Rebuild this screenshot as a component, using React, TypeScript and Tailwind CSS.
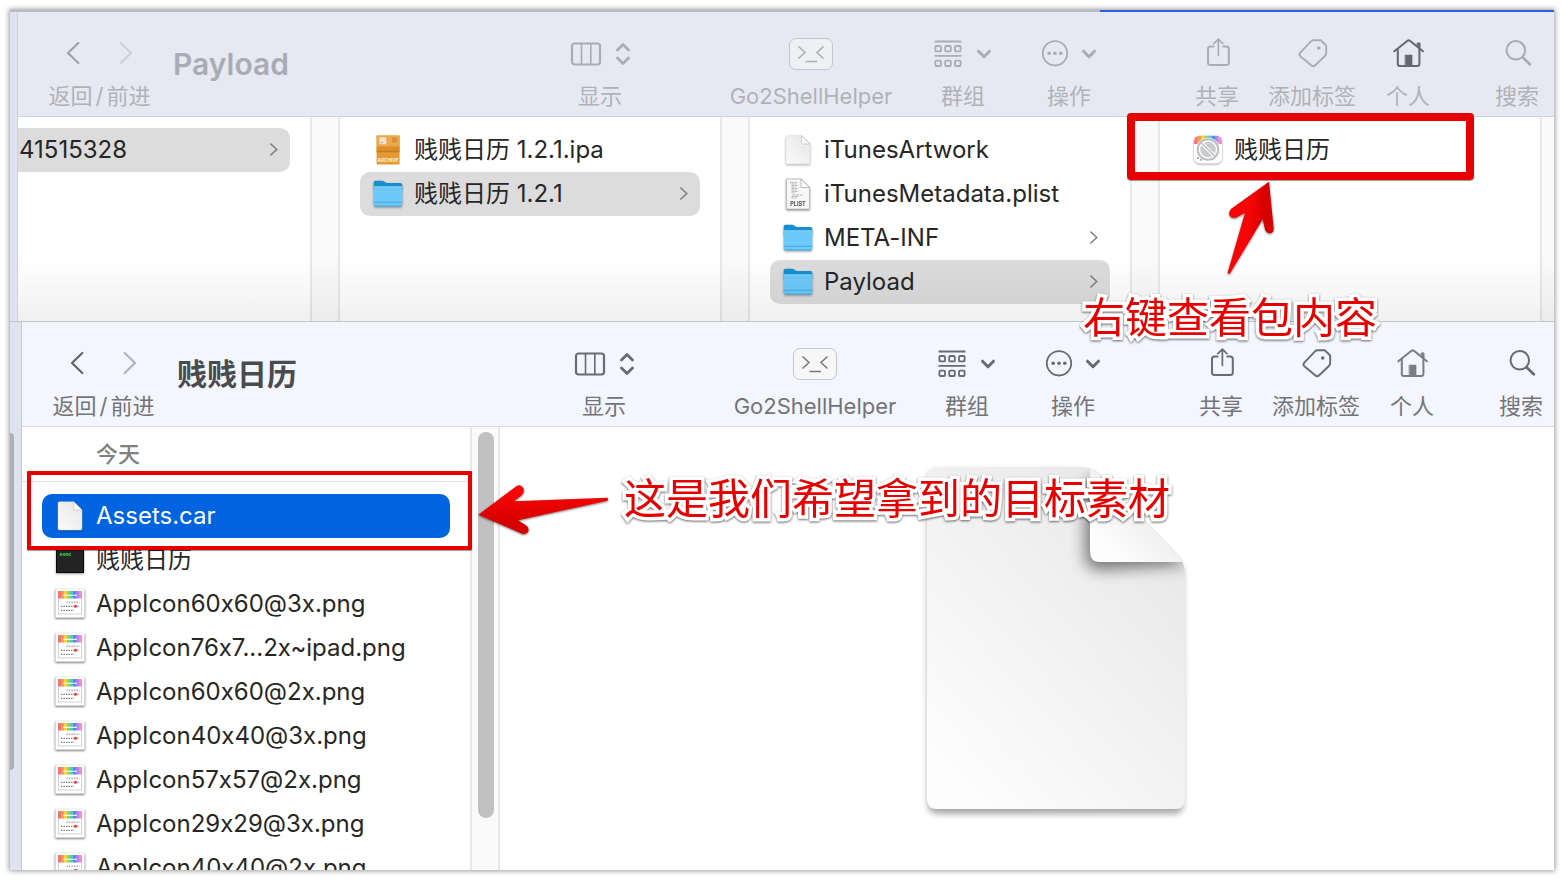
import type { ReactNode } from "react";

type Tone = "dim" | "active";

const tones = {
  dim: {
    header: "bg-[#e6e9f2] border-[#d2d4db]",
    icon: "text-[#a9acb4]",
    label: "text-[#b1b2b7]",
    title: "text-[#a9acb5]",
    back: "text-[#9fa2aa]",
    forward: "text-[#cdd0d8]",
    home: "text-[#656871]",
    shell: "border-[#c4c6cb] bg-[#eff0f4] text-[#a9abb1]",
    pad: "pr-[15px]",
  },
  active: {
    header: "bg-[#f3f6fe] border-[#d9dadf]",
    icon: "text-[#696b73]",
    label: "text-[#737478]",
    title: "text-[#4a4b4e]",
    back: "text-[#62646b]",
    forward: "text-[#b1b4bc]",
    home: "text-[#7a7d87]",
    shell: "border-[#c6c7ca] bg-[#f7f7f8] text-[#77787c]",
    pad: "pr-[11px]",
  },
};

function Chevron({ dir, className }: { dir: "left" | "right"; className: string }) {
  return (
    <svg viewBox="0 0 14 24" className={`h-6 w-3.5 ${className}`} fill="none" stroke="currentColor" strokeWidth="2.2" strokeLinecap="round" strokeLinejoin="round">
      <path d={dir === "left" ? "M12.3 2 2 12l10.300 10" : "M1.700 2 12 12 1.700 22"} />
    </svg>
  );
}

function DownChevron() {
  return (
    <svg viewBox="0 0 16 10" className="h-2.5 w-4" fill="none" stroke="currentColor" strokeWidth="3" strokeLinecap="round" strokeLinejoin="round">
      <path d="M2.500 2.200 8 7.700l5.500-5.500" />
    </svg>
  );
}

function ColumnsIcon() {
  return (
    <svg viewBox="0 0 60 26" className="h-[26px] w-[60px]" fill="none" stroke="currentColor" strokeLinecap="round" strokeLinejoin="round">
      <rect x="2" y="2.500" width="28" height="21" rx="2.500" strokeWidth="2.200" />
      <path d="M11.500 3v20M20.800 3v20" strokeWidth="1.600" />
      <path d="m47.500 9 5.500-5.500L58.500 9M47.500 17l5.500 5.500 5.500-5.500" strokeWidth="2.800" />
    </svg>
  );
}

function GroupIcon() {
  return (
    <svg viewBox="0 0 28 28" className="h-7 w-7" fill="none" stroke="currentColor" strokeWidth="1.800">
      <path d="M.5 1.500h27M.5 15.800h27" />
      <rect x="1.400" y="6" width="5.600" height="5.400" rx="1" />
      <rect x="11.200" y="6" width="5.600" height="5.400" rx="1" />
      <rect x="21" y="6" width="5.600" height="5.400" rx="1" />
      <rect x="1.400" y="20.600" width="5.600" height="5.400" rx="1" />
      <rect x="11.200" y="20.600" width="5.600" height="5.400" rx="1" />
      <rect x="21" y="20.600" width="5.600" height="5.400" rx="1" />
    </svg>
  );
}

function ActionIcon() {
  return (
    <svg viewBox="0 0 28 28" className="h-7 w-7" fill="none" stroke="currentColor" strokeWidth="1.800">
      <circle cx="14" cy="13.300" r="12.200" />
      <g fill="currentColor" stroke="none">
        <circle cx="8.200" cy="13.300" r="1.800" />
        <circle cx="14" cy="13.300" r="1.800" />
        <circle cx="19.800" cy="13.300" r="1.800" />
      </g>
    </svg>
  );
}

function ShareIcon() {
  return (
    <svg viewBox="0 0 32 32" className="size-8" fill="none" stroke="currentColor" strokeWidth="2" strokeLinecap="round" strokeLinejoin="round">
      <path d="M12.500 8.500H9.500Q7 8.500 7 11v13.500Q7 27 9.500 27h15.800q2.500 0 2.500-2.500V11q0-2.500-2.500-2.500h-3" />
      <path d="M17.400 17.500V1.500M12.900 5.700l4.500-4.500 4.500 4.500" strokeWidth="1.700" />
    </svg>
  );
}

function TagIcon() {
  return (
    <svg viewBox="0 0 32 32" className="size-8" fill="none" stroke="currentColor" strokeWidth="1.900" strokeLinejoin="round">
      <path d="M17.500 2.200h7.200l5.500 5.300v7.200q0 2-1.300 3.300l-9.700 9.300q-2 1.900-4 0L4.300 18.200q-1.700-1.800 0-3.600L15 3.300q1-1.100 2.500-1.100Z" />
      <circle cx="22.700" cy="10" r="1.800" fill="currentColor" stroke="none" />
    </svg>
  );
}

function HomeIcon() {
  return (
    <svg viewBox="0 0 32 32" className="size-8" fill="none" stroke="currentColor" strokeWidth="2" strokeLinecap="round" strokeLinejoin="round">
      <path d="M2.300 13.300 15.500 2.800q1.200-.9 2.400 0l13 10.500" />
      <path d="M5.800 11v15q0 2 2 2h17.600q2 0 2-2V11" />
      <path d="M25.500 5h2.500v6l-2.500-2Z" fill="currentColor" strokeWidth="1" />
      <path d="M13.300 17h6.800v11h-6.800Z" fill="currentColor" strokeWidth=".5" />
    </svg>
  );
}

function SearchIcon() {
  return (
    <svg viewBox="0 0 32 32" className="size-8" fill="none" stroke="currentColor" strokeLinecap="round">
      <circle cx="14.800" cy="12.300" r="9.300" strokeWidth="2" />
      <path d="m21.800 19.500 7 6.800" strokeWidth="2.800" />
    </svg>
  );
}

function Tool({ label, width, labelClass, iconClass, children }: { label: string; width: string; labelClass: string; iconClass: string; children: ReactNode }) {
  return (
    <button type="button" className={`flex shrink-0 flex-col items-center gap-3.5 ${width}`}>
      <span className={`flex h-8 w-full items-center justify-center ${iconClass}`}>{children}</span>
      <span className={`text-[22px] leading-6 whitespace-nowrap ${labelClass}`}>{label}</span>
    </button>
  );
}

function Toolbar({ title, tone }: { title: string; tone: Tone }) {
  const t = tones[tone];
  return (
    <header className={`flex h-[105px] shrink-0 items-start border-b pt-[26px] pl-[30px] ${t.header} ${t.pad}`}>
      <div className="flex w-[103px] shrink-0 flex-col items-center gap-3.5">
        <div className="flex h-8 w-full items-center justify-between px-[18px] pb-0.5">
          <button type="button" aria-label="返回">
            <Chevron dir="left" className={t.back} />
          </button>
          <button type="button" aria-label="前进">
            <Chevron dir="right" className={t.forward} />
          </button>
        </div>
        <span className={`text-[22px] leading-6 whitespace-nowrap ${t.label}`}>
          返回<span className="px-[3px]">/</span>前进
        </span>
      </div>
      <h1 className={`mt-1.5 ml-[22px] text-[30px] leading-10 font-semibold whitespace-nowrap ${t.title}`}>{title}</h1>
      <div className="flex-1" />
      <div className="flex shrink-0">
        <Tool label="显示" width="w-[60px] mr-[99px]" labelClass={t.label} iconClass={t.icon}>
          <ColumnsIcon />
        </Tool>
        <Tool label="Go2ShellHelper" width="w-[164px] mr-10" labelClass={t.label} iconClass="">
          <span className={`flex h-8 w-11 items-center justify-center rounded-[7px] border ${t.shell}`}>
            <svg viewBox="0 0 28 20" className="h-5 w-7" fill="none" stroke="currentColor" strokeWidth="1.500">
              <path d="m1.500 2.500 6.500 6-6.500 6M26.500 2.500l-6.500 6 6.500 6M8.500 17.500h11.500" />
            </svg>
          </span>
        </Tool>
        <Tool label="群组" width="w-[60px] mr-12" labelClass={t.label} iconClass={`gap-3.5 ${t.icon}`}>
          <GroupIcon />
          <DownChevron />
        </Tool>
        <Tool label="操作" width="w-[56px] mr-[98px]" labelClass={t.label} iconClass={`gap-3 ${t.icon}`}>
          <ActionIcon />
          <DownChevron />
        </Tool>
        <Tool label="共享" width="w-11 mr-[29px]" labelClass={t.label} iconClass={t.icon}>
          <ShareIcon />
        </Tool>
        <Tool label="添加标签" width="w-[88px] mr-[30px]" labelClass={t.label} iconClass={t.icon}>
          <TagIcon />
        </Tool>
        <Tool label="个人" width="w-11 mr-[65px]" labelClass={t.label} iconClass={t.home}>
          <HomeIcon />
        </Tool>
        <Tool label="搜索" width="w-11" labelClass={t.label} iconClass={t.icon}>
          <SearchIcon />
        </Tool>
      </div>
    </header>
  );
}

function FolderIcon() {
  return (
    <svg viewBox="0 0 30 30" className="size-[30px] drop-shadow-[0_1px_1px_rgba(0,0,0,0.35)]">
      <path d="M.7 3.500Q.7 1.700 2.500 1.700h6.800q1 0 1.800.7l1.400 1.200q.5.400 1.300.4h13.500q2 0 2 2V12H.7Z" fill="#1590cf" />
      <path d="M.7 8h28.600v17.500q0 2-2 2H2.700q-2 0-2-2Z" fill="#6cc9f9" />
      <path d="M.7 7.700h28.600" stroke="#a1defd" strokeWidth=".8" />
      <path d="M.7 23.300h28.600" stroke="#47a9dd" strokeWidth="1" />
      <path d="M1.500 27h27" stroke="#469fcc" strokeWidth=".9" />
    </svg>
  );
}

function FileIcon() {
  return (
    <svg viewBox="0 0 30 30" className="size-[30px] drop-shadow-[0_1px_1px_rgba(0,0,0,0.3)]">
      <defs>
        <linearGradient id="sheet" x1="1" y1="0" x2="0" y2="1">
          <stop offset="0" stopColor="#e6e6e6" />
          <stop offset="1" stopColor="#fbfbfb" />
        </linearGradient>
      </defs>
      <path d="M3 2.200Q3 .8 4.400.8H19l8 8v18.800q0 1.400-1.400 1.400H4.400Q3 29 3 27.600Z" fill="url(#sheet)" stroke="#dadada" strokeWidth=".5" />
      <path d="M18.700.8v7q0 1.200 1.200 1.200H27Z" fill="#fff" stroke="#bdbdbd" strokeWidth=".7" />
    </svg>
  );
}

function PlistIcon() {
  return (
    <svg viewBox="0 0 30 32" className="h-8 w-[30px] drop-shadow-[0_1px_1px_rgba(0,0,0,0.5)]">
      <path d="M3.500 1H18l8.500 8.500V31h-23Z" fill="#f7f7f7" stroke="#b5b5b5" strokeWidth=".7" />
      <path d="M18 1v8.500h8.500Z" fill="#fff" stroke="#aaa" strokeWidth=".8" />
      <path d="M7 4.500h7.500M8.500 6h5M8.500 7.500h6M8.500 9h4.500M8.500 10.500h6M8.500 12h5M8.500 13.500h6M8.500 15h4M9.500 17h11M8.500 18.500h7M8.500 20h5" stroke="#b9b9b9" strokeWidth="1" strokeDasharray="3 .6" />
      <text x="15" y="27.500" textAnchor="middle" fontSize="5.500" fontWeight="700" fill="#555">PLIST</text>
    </svg>
  );
}

function ArchiveIcon() {
  return (
    <svg viewBox="0 0 30 30" className="size-[30px]">
      <rect x="3.600" y=".5" width="23" height="29" rx=".8" fill="#e49a34" />
      <rect x="3.600" y=".5" width="23" height="11" fill="#eaa84c" />
      <path d="M3.600 11.500h23v4h-23Z" fill="#dc8e2a" />
      <path d="M3.600 15.500h23v1.800h-23Z" fill="#c97c1e" />
      <rect x="6.300" y="2.300" width="7" height="7" fill="#efe3cd" />
      <path d="M7.500 7.500h2.500" stroke="#c4aa83" />
      <rect x="19.500" y="3" width="4" height="4" fill="#d99434" stroke="#c78328" strokeWidth=".5" />
      <text x="15.100" y="27" textAnchor="middle" fontSize="4.700" fontWeight="700" fill="#fff4dc">ARCHIVE</text>
    </svg>
  );
}

function ExecIcon() {
  return (
    <svg viewBox="0 0 30 30" className="size-[30px] drop-shadow-[0_1px_1px_rgba(0,0,0,0.4)]">
      <rect x="1.500" y="1.500" width="27" height="26" fill="#242424" stroke="#080808" />
      <text x="4.500" y="11" fontSize="5" fontWeight="800" fill="#35c648">exec</text>
    </svg>
  );
}

function Rainbow({ x, y, w, h }: { x: number; y: number; w: number; h: number }) {
  const colors = ["#f4737b", "#f79a4b", "#f7d33d", "#8fd941", "#58c8c4", "#5a86f2", "#b184f0", "#f08fc8"];
  return (
    <g>
      {colors.map((c, i) => (
        <rect key={c} x={x + (i * w) / 8} y={y} width={w / 8 + 0.1} height={h} fill={c} />
      ))}
    </g>
  );
}

function PngIcon() {
  return (
    <svg viewBox="0 0 30 30" className="size-[30px] drop-shadow-[0_1px_1px_rgba(0,0,0,0.55)]">
      <rect x=".5" y="0" width="29" height="28.500" fill="#fff" stroke="#dcdcdc" strokeWidth=".6" />
      <rect x="3.500" y="2.500" width="23" height="22.500" fill="#fff" stroke="#cdcdcd" strokeWidth=".9" />
      <Rainbow x={3} y={2} w={24} h={7.500} />
      <path d="M8 6.300h14" stroke="#fff" strokeWidth="1.100" />
      <g strokeWidth="1.300" strokeDasharray="1.400 1.100">
        <path d="M11.500 13.200h13" stroke="#999" />
        <path d="M6 17.300h18" stroke="#777" />
        <path d="M6 21.300h13" stroke="#777" />
      </g>
      <circle cx="20.500" cy="17.300" r="1.500" fill="#f5332f" />
    </svg>
  );
}

function AppIcon() {
  return (
    <svg viewBox="0 0 30 30" className="size-[30px] drop-shadow-[0_1px_1px_rgba(0,0,0,0.35)]">
      <defs>
        <clipPath id="app-shape">
          <rect x="1" y=".5" width="28" height="28" rx="6" />
        </clipPath>
      </defs>
      <g clipPath="url(#app-shape)">
        <rect width="30" height="30" fill="#fff" />
        <Rainbow x={1} y={0.500} w={28} h={8.500} />
        <path d="M5 22.500v1.500M8 24v1.500" stroke="#555" strokeWidth="1.200" />
      </g>
      <circle cx="15" cy="14.500" r="12" fill="#fff" fillOpacity=".7" />
      <circle cx="15" cy="14.500" r="10.300" fill="#fff" stroke="#bfbfbf" strokeWidth="2" />
      <circle cx="15" cy="14.500" r="7.800" fill="#c9cbcd" />
      <path d="m9 8.500 12 12" stroke="#fff" strokeWidth="3.600" />
      <path d="m8.300 7.800 13.400 13.400" stroke="#bfbfbf" strokeWidth="1.600" />
    </svg>
  );
}

function RowChevron() {
  return (
    <svg viewBox="0 0 8 14" className="h-3.5 w-2" fill="none" stroke="#7f7f7f" strokeWidth="1.600" strokeLinecap="round" strokeLinejoin="round">
      <path d="m.8 1 6 5.500-6 5.500" />
    </svg>
  );
}

function Row({ icon, name, state = "", folder = false }: { icon: ReactNode; name: string; state?: string; folder?: boolean }) {
  return (
    <button type="button" className={`flex h-11 w-full shrink-0 items-center gap-[11px] rounded-[10px] pr-3 pl-[13px] text-left text-2xl whitespace-nowrap ${state || "text-[#262626]"}`}>
      {icon}
      <span className="flex-1">{name}</span>
      {folder && <RowChevron />}
    </button>
  );
}

const selected = "bg-[#dcdcdc] text-[#262626]";

function Gutter({ children }: { children?: ReactNode }) {
  return <div className="w-[30px] shrink-0 border-x-2 border-[#e8e8e8] bg-[#fafafa] px-1.5 pt-[5px]">{children}</div>;
}

function DocumentPreview() {
  return (
    <svg viewBox="60 60 819 1089" className="h-[363px] w-[273px]">
      <defs>
        <linearGradient id="page" x1="0.900" y1="0.150" x2="0.200" y2="1">
          <stop offset="0" stopColor="#e8e8e8" />
          <stop offset="1" stopColor="#fdfdfd" />
        </linearGradient>
        <linearGradient id="fold" x1="1" y1="0.300" x2="0.300" y2="1">
          <stop offset="0" stopColor="#e2e2e2" />
          <stop offset="1" stopColor="#fdfdfd" />
        </linearGradient>
        <clipPath id="page-shape">
          <path d="M81 115Q81 81 115 81H545Q590 81 620 122L835 345Q855 365 855 405V1077Q855 1107 825 1107H111Q81 1107 81 1077Z" />
        </clipPath>
        <filter id="soft" x="-30%" y="-30%" width="160%" height="160%">
          <feGaussianBlur stdDeviation="22" />
        </filter>
        <filter id="edge" x="-10%" y="-10%" width="120%" height="120%">
          <feGaussianBlur stdDeviation="9" />
        </filter>
      </defs>
      <path d="M83 120Q83 92 115 92H545L850 390V1090Q850 1122 825 1122H111Q83 1122 83 1090Z" fill="#000" opacity=".34" filter="url(#edge)" />
      <g clipPath="url(#page-shape)">
        <rect x="81" y="81" width="774" height="1026" fill="url(#page)" />
        <path d="M556 130V345Q556 388 600 390L860 374 L600 110Z" fill="#000" opacity=".5" filter="url(#soft)" />
        <path d="M570 81V336Q570 366 600 366H870V60H570Z" fill="url(#fold)" />
      </g>
    </svg>
  );
}

const files = [
  "AppIcon60x60@3x.png",
  "AppIcon76x7...2x~ipad.png",
  "AppIcon60x60@2x.png",
  "AppIcon40x40@3x.png",
  "AppIcon57x57@2x.png",
  "AppIcon29x29@3x.png",
  "AppIcon40x40@2x.png",
];

function Note({ children, className }: { children: string; className: string }) {
  return (
    <p className={`absolute text-[42px] leading-[56px] whitespace-nowrap text-[#e60000] [paint-order:stroke_fill] [-webkit-text-stroke:7px_white] drop-shadow-[0_1px_1px_rgba(0,0,0,0.6)] ${className}`}>
      {children}
    </p>
  );
}

function Annotations() {
  return (
    <div className="pointer-events-none absolute inset-0">
      <div className="absolute top-[103px] left-[1117px] h-[67px] w-[347px] rounded border-8 border-[#e60000] shadow-[0_1px_1px_rgba(0,0,0,0.4)]" />
      <div className="absolute top-[461px] left-[17px] h-[79px] w-[445px] rounded-[1px] border-4 border-[#e60000] shadow-[0_1px_1px_rgba(0,0,0,0.4)]" />
      <svg viewBox="378 540 150 288" className="absolute top-[170px] left-[1216px] h-24 w-[50px] drop-shadow-[0_1px_1px_rgba(0,0,0,0.5)]">
        <defs>
          <linearGradient id="up" x1="0" y1="0.400" x2="1" y2="0.600">
            <stop offset=".45" stopColor="#f50505" />
            <stop offset=".75" stopColor="#d60000" />
          </linearGradient>
        </defs>
        <path d="M507 545 394 626Q384 636 389 647 397 658 411 652L435 638 383 818Q385 824 390 820L488 658 495 688Q500 701 511 700 522 697 521 685Z" fill="url(#up)" />
      </svg>
      <svg viewBox="54 462 393 153" className="absolute top-[474px] left-[468px] h-[51px] w-[131px] drop-shadow-[0_1px_1px_rgba(0,0,0,0.5)]">
        <defs>
          <linearGradient id="side" x1="0" y1="0" x2="0" y2="1">
            <stop offset=".2" stopColor="#f50505" />
            <stop offset=".75" stopColor="#d60000" />
          </linearGradient>
        </defs>
        <path d="M55 554 170 468Q182 462 190 474 194 486 186 495L162 514 442 503Q447 508 442 512L174 571 200 587Q209 596 204 606 198 614 186 611Z" fill="url(#side)" />
      </svg>
      <Note className="top-[280px] left-[1073px]">右键查看包内容</Note>
      <Note className="top-[461px] left-[614px]">这是我们希望拿到的目标素材</Note>
    </div>
  );
}

export default function App() {
  return (
    <main className="h-screen bg-white p-2.5 font-['Inter','Noto_Sans_CJK_SC',sans-serif] [font-feature-settings:'calt'_0]">
      <div className="relative flex h-full flex-col overflow-hidden bg-[#dfe3ed] shadow-[0_0_5px_1px_rgba(0,0,0,0.4)]">
        <div className="flex h-0.5 shrink-0 bg-[#b9babd]">
          <div className="ml-[1090px] flex-1 bg-[#2563dc]" />
        </div>

        <section className="relative ml-[7px] flex h-[309px] shrink-0 flex-col border-l border-[#cfd2da] bg-white">
          <Toolbar title="Payload" tone="dim" />
          <div className="relative flex flex-1">
            <div className="w-[292px] shrink-0 pt-[11px] pr-5">
              <button type="button" className="flex h-11 w-full items-center justify-between rounded-r-[10px] bg-[#dcdcdc] pr-3 pl-px text-2xl text-[#262626]">
                41515328
                <RowChevron />
              </button>
            </div>
            <Gutter />
            <div className="w-[380px] shrink-0 px-5 pt-[11px]">
              <Row icon={<ArchiveIcon />} name="贱贱日历 1.2.1.ipa" />
              <Row icon={<FolderIcon />} name="贱贱日历 1.2.1" state={selected} folder />
            </div>
            <Gutter />
            <div className="w-[380px] shrink-0 px-5 pt-[11px]">
              <Row icon={<FileIcon />} name="iTunesArtwork" />
              <Row icon={<PlistIcon />} name="iTunesMetadata.plist" />
              <Row icon={<FolderIcon />} name="META-INF" folder />
              <Row icon={<FolderIcon />} name="Payload" state={selected} folder />
            </div>
            <Gutter />
            <div className="flex-1 px-5 pt-[11px]">
              <Row icon={<AppIcon />} name="贱贱日历" />
            </div>
            <div className="w-3.5 shrink-0 border-l-2 border-[#e8e8e8] bg-[#fafafa]" />
            <div className="pointer-events-none absolute inset-x-0 bottom-0 h-16 bg-linear-to-b from-transparent to-black/6" />
          </div>
        </section>

        <div className="flex min-h-0 flex-1 border-t border-[#c3c5ca]">
          <div className="w-3 shrink-0 border-r border-[#c9ccd5] pt-[111px]">
            <div className="h-[337px] w-1 rounded-r bg-[#aeb0b6]" />
          </div>
          <section className="flex min-w-0 flex-1 flex-col bg-white">
            <Toolbar title="贱贱日历" tone="active" />
            <div className="flex min-h-0 flex-1">
              <div className="w-[448px] shrink-0 overflow-hidden">
                <h2 className="h-[55px] border-b border-[#dedede] pl-[74px] text-[22px] leading-[54px] font-medium text-[#808080]">今天</h2>
                <div className="px-5 pt-3">
                  <Row icon={<FileIcon />} name="Assets.car" state="bg-[#0064e1] text-white" />
                  <Row icon={<ExecIcon />} name="贱贱日历" />
                  {files.map((f) => (
                    <Row key={f} icon={<PngIcon />} name={f} />
                  ))}
                </div>
              </div>
              <Gutter>
                <div className="-mr-0.5 h-[386px] w-4 rounded-full bg-[#c1c1c1]" />
              </Gutter>
              <div className="flex min-w-0 flex-1 items-start justify-center pt-[33px] pl-[58px]">
                <DocumentPreview />
              </div>
            </div>
          </section>
        </div>
        <Annotations />
      </div>
    </main>
  );
}
